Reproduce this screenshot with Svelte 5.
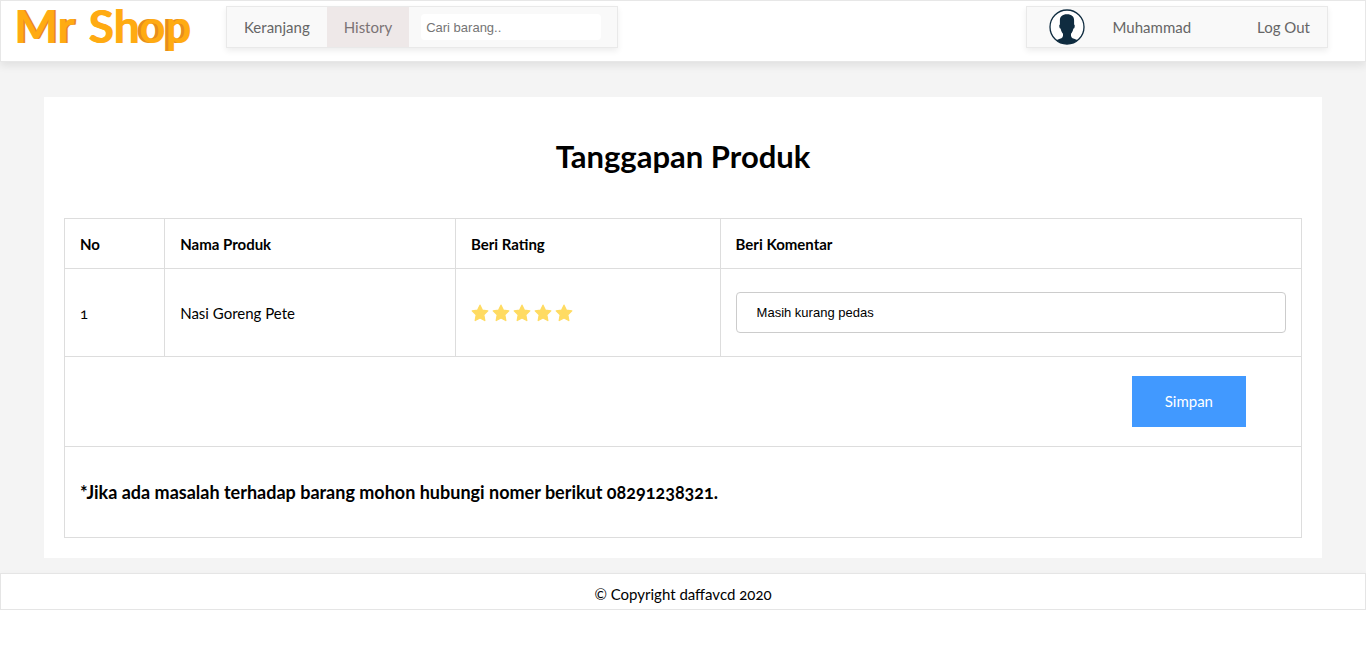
<script>
  let search = $state('');
  let products = $state([
    { name: 'Nasi Goreng Pete', rating: 5, comment: 'Masih kurang pedas' }
  ]);
  const scores = [1, 2, 3, 4, 5];
</script>

<div class="page">
  <header class="bar">
    <a class="logo" href="#home"><span class="mr">Mr</span><span class="sh">Sh</span><span class="op">op</span></a>
    <nav class="menu">
      <a href="#keranjang">Keranjang</a>
      <a class="active" href="#history">History</a>
      <input class="search" type="text" aria-label="Cari barang" placeholder="Cari barang.." bind:value={search} />
    </nav>
    <nav class="menu account">
      <svg class="avatar" viewBox="0 0 36 36" aria-hidden="true">
        <defs><clipPath id="face"><circle cx="18" cy="18" r="17" /></clipPath></defs>
        <circle cx="18" cy="18" r="17.2" fill="#fff" />
        <path clip-path="url(#face)" fill="#0f2c40" d="M18 5.3c4.8 0 7.2 2.4 7.1 6.5v3.6c.7.2.8 1.3.5 2.6-.2 1-.6 1.5-1.2 1.6-.4 2.2-1.3 3.9-2.4 5.2v2c.3 2.3 2.2 2.8 5 3.8 2.7.9 4.3 1.9 5 3.4v4H4v-4c.7-1.5 2.3-2.5 5-3.4 2.800-1 4.700-1.500 5-3.800v-2c-1.100-1.300-2-3-2.400-5.200-.6-.1-1-.6-1.200-1.600-.3-1.300-.2-2.400.5-2.600v-3.600c-.1-4.100 2.300-6.500 7.100-6.500z" />
        <circle cx="18" cy="18" r="17" fill="none" stroke="#0f2c40" stroke-width="1.3" />
      </svg>
      <a class="user" href="#profile">Muhammad</a>
      <a href="#logout">Log Out</a>
    </nav>
  </header>

  <main>
    <form class="card" onsubmit={(e) => e.preventDefault()}>
      <h1>Tanggapan Produk</h1>
      <table>
        <colgroup><col class="c-no" /><col class="c-name" /><col class="c-rate" /><col /></colgroup>
        <thead>
          <tr><th>No</th><th>Nama Produk</th><th>Beri Rating</th><th>Beri Komentar</th></tr>
        </thead>
        <tbody>
          {#each products as product, i}
            <tr class="product">
              <td class="digits">{i + 1}</td>
              <td>{product.name}</td>
              <td>
                <div class="stars">
                  {#each scores as score}
                    <button type="button" class="star" class:off={score > product.rating} aria-label={`Rating ${score}`} onclick={() => (product.rating = score)}>
                      <svg viewBox="0 0 18 18" aria-hidden="true"><path d="M9 1.2l2.300 4.900 5.500.8-4 3.900 1 5.700L9 13.900l-4.800 2.600 1-5.700-4-3.900 5.500-.8z" fill="currentColor" stroke="currentColor" stroke-width="1.3" stroke-linejoin="round" /></svg>
                    </button>
                  {/each}
                </div>
              </td>
              <td><input class="comment" type="text" aria-label="Beri Komentar" bind:value={product.comment} /></td>
            </tr>
          {/each}
          <tr><td class="actions" colspan="4"><button class="save" type="submit">Simpan</button></td></tr>
          <tr><td class="note" colspan="4"><h3>*Jika ada masalah terhadap barang mohon hubungi nomer berikut <span class="digits">08291238321</span>.</h3></td></tr>
        </tbody>
      </table>
    </form>
  </main>

  <footer>© Copyright daffavcd <span class="digits">2020</span></footer>
</div>

<style>
  :global(body) {
    margin: 0;
    background: #fff;
  }
  .page {
    font-family: Corbel, Lato, sans-serif;
    font-size: 15px;
    line-height: 20px;
    color: #000;
  }
  .page * {
    box-sizing: border-box;
  }
  .bar {
    position: relative;
    display: flex;
    align-items: flex-start;
    height: 62px;
    padding: 5px 37px 0 13px;
    background: #fff;
    border: 1px solid #e7e7e7;
    box-shadow: 0 4px 8px rgba(0, 0, 0, 0.08);
  }
  .logo {
    display: flex;
    flex: none;
    width: 212px;
    height: 48px;
    font-family: Lato, sans-serif;
    font-size: 46px;
    font-weight: 700;
    line-height: 40px;
    color: #ffab12;
    text-decoration: none;
  }
  .mr {
    margin-right: 14px;
    text-shadow: 2px 0 #e88b20;
  }
  .sh {
    text-shadow: 1px 0 #ffab12;
  }
  .op {
    text-shadow: -3px 0 #e88b20;
  }
  .menu {
    display: flex;
    align-items: center;
    height: 42px;
    background: #f9f9f9;
    border: 1px solid #e9e9e9;
    box-shadow: 0 3px 6px rgba(0, 0, 0, 0.07);
  }
  .menu a {
    padding: 10px 17px;
    line-height: 20px;
    color: #666;
    text-decoration: none;
  }
  .menu .active {
    background: #eee8e8;
    color: #7b7375;
  }
  .search {
    width: 180px;
    height: 26px;
    margin: 0 16px 0 12px;
    padding: 0 5px;
    border: 0;
    border-radius: 4px;
    background: #fff;
    font: 13px 'Liberation Sans', Arial, sans-serif;
  }
  .search::placeholder {
    color: #757575;
  }
  .account {
    margin-left: auto;
    padding-left: 22px;
  }
  .avatar {
    width: 36px;
    height: 36px;
    margin-right: 11px;
  }
  .account .user {
    margin-right: 32px;
  }
  main {
    padding: 35px 44px 15px;
    background: #f4f4f4;
  }
  .card {
    padding: 39px 20px 20px;
    background: #fff;
  }
  h1 {
    margin: 0 0 42px;
    font-size: 31px;
    line-height: 40px;
    font-weight: 700;
    text-align: center;
  }
  table {
    width: 100%;
    table-layout: fixed;
    border-collapse: collapse;
  }
  .c-no {
    width: 8.1%;
  }
  .c-name {
    width: 23.5%;
  }
  .c-rate {
    width: 21.4%;
  }
  th,
  td {
    height: 50px;
    padding: 0 15px;
    border: 1px solid #ddd;
    text-align: left;
    vertical-align: middle;
  }
  .product td {
    height: 88px;
  }
  .stars {
    display: flex;
    gap: 3px;
  }
  .star {
    width: 18px;
    height: 18px;
    padding: 0;
    border: 0;
    background: none;
    color: #ffdb62;
  }
  .star.off {
    color: #ddd;
  }
  .star svg {
    display: block;
  }
  .comment {
    display: block;
    width: 100%;
    height: 41px;
    padding: 0 20px;
    border: 1px solid #ccc;
    border-radius: 4px;
    color: #000;
    font: 13px 'Liberation Sans', Arial, sans-serif;
  }
  td.actions {
    height: 90px;
    padding-right: 55px;
    text-align: right;
  }
  .save {
    padding: 15px 33px 16px;
    border: 0;
    background: #4199ff;
    color: #fff;
    font: inherit;
  }
  td.note {
    height: 91px;
  }
  h3 {
    margin: 0;
    font-size: 18px;
    line-height: 24px;
  }
  .digits {
    font-feature-settings: 'onum';
  }
  footer {
    position: relative;
    height: 37px;
    padding-top: 10px;
    background: #fff;
    border: 1px solid #e5e5e5;
    box-shadow: 0 4px 8px rgba(0, 0, 0, 0.08);
    text-align: center;
  }
</style>
